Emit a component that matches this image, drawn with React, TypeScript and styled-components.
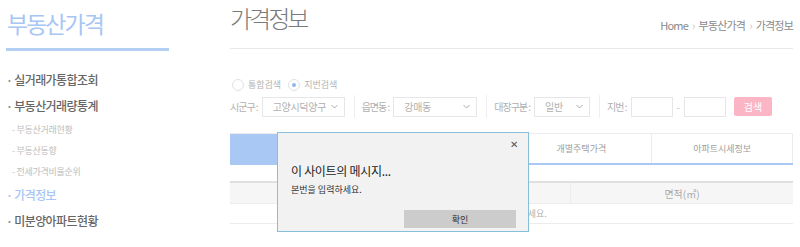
import styled, { createGlobalStyle } from 'styled-components';

const GlobalStyle = createGlobalStyle`
  body {
    margin: 0;
    background: #ffffff;
    font-family: 'Noto Sans CJK KR', 'Noto Sans', sans-serif;
  }
`;

const Page = styled.div`
  position: relative;
  display: flex;
  width: 800px;
  height: 247px;
  overflow: hidden;
`;

const Sidebar = styled.aside`
  width: 163px;
  margin-left: 6px;
  flex-shrink: 0;
`;

const SideTitle = styled.h2`
  margin: 0;
  padding: 11px 0 0 1px;
  font-size: 23px;
  line-height: 24px;
  font-weight: 400;
  letter-spacing: -2px;
  color: #a7c6f4;
`;

const SideBar = styled.div`
  height: 3px;
  margin-top: 13px;
  background: #b3cff5;
`;

const Menu = styled.ul`
  list-style: none;
  margin: 16px 0 0;
  padding: 0;
`;

const MenuItem = styled.li<{ $active?: boolean }>`
  height: 26px;
  line-height: 26px;
  font-size: 12px;
  font-weight: 500;
  letter-spacing: -0.6px;
  color: ${(p) => (p.$active ? '#a7c6f4' : '#666666')};
  &::before {
    content: '·';
    margin-right: 2px;
    color: ${(p) => (p.$active ? '#a7c6f4' : '#888')};
  }
`;

const SubItem = styled.li`
  height: 21px;
  line-height: 21px;
  padding-left: 6px;
  font-size: 9px;
  letter-spacing: -0.3px;
  color: #bdbdbd;
  &::before {
    content: '- ';
    color: #c8c8c8;
  }
`;

const Main = styled.main`
  margin-left: 61px;
  width: 563px;
`;

const Header = styled.header`
  display: flex;
  justify-content: space-between;
  align-items: flex-start;
  height: 49px;
  border-bottom: 1px solid #e8e8e8;
  box-sizing: border-box;
`;

const PageTitle = styled.h1`
  margin: 0;
  padding-top: 5px;
  font-size: 24px;
  line-height: 26px;
  font-weight: 300;
  letter-spacing: -3px;
  color: #7a7a7a;
`;

const Crumbs = styled.div`
  margin-top: 17px;
  font-size: 11px;
  letter-spacing: -0.8px;
  color: #8a8a8a;
  span {
    margin: 0 4px;
    color: #c4c4c4;
  }
`;

const RadioRow = styled.div`
  display: flex;
  align-items: center;
  gap: 7px;
  margin-top: 29px;
  margin-left: 2px;
  height: 13px;
`;

const RadioLabel = styled.label`
  display: flex;
  align-items: center;
  gap: 4px;
  font-size: 9px;
  color: #b3b3b3;
`;

const RadioDot = styled.span<{ $checked?: boolean }>`
  position: relative;
  width: 10px;
  height: 10px;
  border-radius: 50%;
  border: 1px solid #e2e2e2;
  background: #fff;
  &::after {
    content: '';
    display: ${(p) => (p.$checked ? 'block' : 'none')};
    position: absolute;
    left: 3px;
    top: 3px;
    width: 4px;
    height: 4px;
    border-radius: 50%;
    background: #8fb6ef;
  }
`;

const SearchRow = styled.div`
  display: flex;
  align-items: center;
  margin-top: 4px;
  height: 23px;
`;

const FieldLabel = styled.span`
  font-size: 10px;
  letter-spacing: -1px;
  color: #b0b0b0;
  margin-right: 4px;
  white-space: nowrap;
`;

const SelectBox = styled.div<{ $width: number }>`
  display: flex;
  align-items: center;
  justify-content: space-between;
  box-sizing: border-box;
  width: ${(p) => p.$width}px;
  height: 20px;
  padding: 0 6px 0 10px;
  border: 1px solid #e6e6e6;
  font-size: 10px;
  letter-spacing: -0.3px;
  color: #b0b0b0;
`;

const TextBox = styled.div`
  box-sizing: border-box;
  width: 42px;
  height: 20px;
  border: 1px solid #e6e6e6;
`;

const Dash = styled.span`
  margin: 0 4px;
  font-size: 10px;
  color: #c4c4c4;
`;

const Divider = styled.span`
  width: 1px;
  height: 23px;
  margin: 0 7px 0 9px;
  background: #efefef;
`;

const SearchButton = styled.button`
  margin-left: 8px;
  width: 38px;
  height: 19px;
  border: none;
  border-radius: 2px;
  background: #fbb5c4;
  color: #ffffff;
  font-family: inherit;
  font-size: 10px;
  padding: 0;
`;

const Tabs = styled.div`
  display: grid;
  grid-template-columns: repeat(4, 1fr);
  margin-top: 15px;
  height: 30px;
  border-bottom: 2px solid #a9c8f3;
`;

const Tab = styled.div<{ $active?: boolean }>`
  display: flex;
  align-items: center;
  justify-content: center;
  border: 1px solid #ececec;
  border-bottom: none;
  border-left: none;
  background: ${(p) => (p.$active ? '#a9c8f3' : '#fff')};
  font-size: 9px;
  color: #a0a0a0;
`;

const Table = styled.div`
  margin-top: 16px;
  border-top: 2px solid #e0e0e0;
`;

const TableHead = styled.div`
  display: grid;
  grid-template-columns: 340px 1fr;
  height: 20px;
  background: #f6f6f6;
  border-bottom: 1px solid #ececec;
`;

const HeadCell = styled.div`
  display: flex;
  align-items: center;
  justify-content: center;
  font-size: 10px;
  color: #a8a8a8;
  & + & {
    border-left: 1px solid #ececec;
  }
`;

const EmptyRow = styled.div`
  height: 19px;
  line-height: 19px;
  text-align: center;
  font-size: 9px;
  color: #b0b0b0;
  border-bottom: 1px solid #ececec;
`;

const Dialog = styled.div`
  position: absolute;
  left: 277px;
  top: 132px;
  width: 252px;
  height: 100px;
  box-sizing: border-box;
  border: 1px solid #86bedb;
  background: #f2f2f2;
  display: flex;
  flex-direction: column;
  padding: 0 12px 0 13px;
`;

const CloseMark = styled.div`
  align-self: flex-end;
  margin-top: 4px;
  margin-right: -2px;
  font-size: 10px;
  line-height: 13px;
  color: #555;
`;

const DialogTitle = styled.div`
  margin-top: 13px;
  font-size: 12px;
  line-height: 16px;
  letter-spacing: -0.3px;
  color: #222;
`;

const DialogText = styled.div`
  margin-top: 4px;
  font-size: 9px;
  line-height: 13px;
  color: #333;
`;

const DialogButton = styled.button`
  align-self: flex-end;
  margin-top: 14px;
  width: 112px;
  height: 18px;
  border: none;
  padding: 0;
  background: #cccccc;
  font-family: inherit;
  font-size: 9px;
  color: #333;
`;

function Chevron() {
  return (
    <svg width="7" height="5" viewBox="0 0 7 5">
      <path d="M0.5 1 L3.5 4 L6.5 1" fill="none" stroke="#a8a8a8" strokeWidth="1" />
    </svg>
  );
}

export default function App() {
  return (
    <>
      <GlobalStyle />
      <Page>
        <Sidebar>
          <SideTitle>부동산가격</SideTitle>
          <SideBar />
          <Menu>
            <MenuItem>실거래가통합조회</MenuItem>
            <MenuItem>부동산거래량통계</MenuItem>
            <SubItem>부동산거래현황</SubItem>
            <SubItem>부동산동향</SubItem>
            <SubItem>전세가격비율순위</SubItem>
            <MenuItem $active>가격정보</MenuItem>
            <MenuItem>미분양아파트현황</MenuItem>
          </Menu>
        </Sidebar>

        <Main>
          <Header>
            <PageTitle>가격정보</PageTitle>
            <Crumbs>
              Home<span>›</span>부동산가격<span>›</span>가격정보
            </Crumbs>
          </Header>

          <RadioRow>
            <RadioLabel>
              <RadioDot />
              통합검색
            </RadioLabel>
            <RadioLabel>
              <RadioDot $checked />
              지번검색
            </RadioLabel>
          </RadioRow>

          <SearchRow>
            <FieldLabel>시군구 :</FieldLabel>
            <SelectBox $width={83}>
              고양시덕양구 <Chevron />
            </SelectBox>
            <Divider />
            <FieldLabel>읍면동 :</FieldLabel>
            <SelectBox $width={84}>
              강매동 <Chevron />
            </SelectBox>
            <Divider />
            <FieldLabel>대장구분 :</FieldLabel>
            <SelectBox $width={56}>
              일반 <Chevron />
            </SelectBox>
            <Divider />
            <FieldLabel>지번 :</FieldLabel>
            <TextBox />
            <Dash>-</Dash>
            <TextBox />
            <SearchButton>검색</SearchButton>
          </SearchRow>

          <Tabs>
            <Tab $active>공시지가</Tab>
            <Tab>공동주택가격</Tab>
            <Tab>개별주택가격</Tab>
            <Tab>아파트시세정보</Tab>
          </Tabs>

          <Table>
            <TableHead>
              <HeadCell>소재지</HeadCell>
              <HeadCell>면적(㎡)</HeadCell>
            </TableHead>
            <EmptyRow>지번을 입력하세요.</EmptyRow>
          </Table>
        </Main>

        <Dialog>
          <CloseMark>✕</CloseMark>
          <DialogTitle>이 사이트의 메시지...</DialogTitle>
          <DialogText>본번을 입력하세요.</DialogText>
          <DialogButton>확인</DialogButton>
        </Dialog>
      </Page>
    </>
  );
}
